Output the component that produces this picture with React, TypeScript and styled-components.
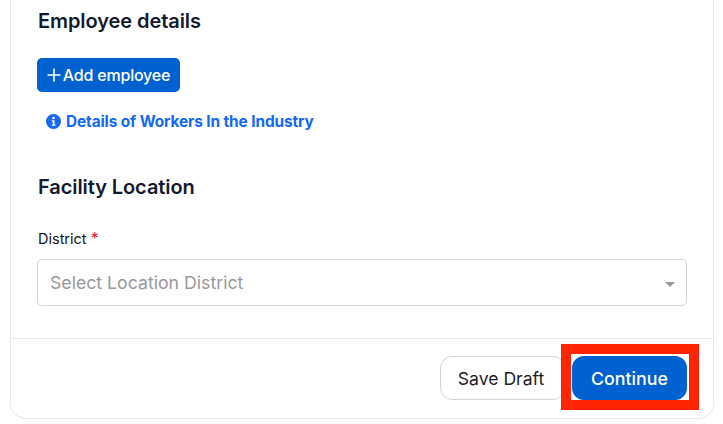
import styled, { createGlobalStyle } from 'styled-components';

const GlobalStyle = createGlobalStyle`
  html, body {
    margin: 0;
    padding: 0;
    background: #ffffff;
    overflow: hidden;
  }
  body {
    font-family: Inter, "Liberation Sans", sans-serif;
  }
`;

export default function App() {
  return (
    <Page>
      <GlobalStyle />
      <Card>
        <Body>
          <SectionTitle>Employee details</SectionTitle>
          <AddButton>
            <svg width="14" height="14" viewBox="0 0 14 14" fill="none">
              <path d="M7 0.5v13M0.5 7h13" stroke="#fff" strokeWidth="1.6" />
            </svg>
            Add employee
          </AddButton>
          <InfoLink>
            <svg width="15" height="15" viewBox="0 0 15 15">
              <circle cx="7.5" cy="7.5" r="7.5" fill="#1469f0" />
              <circle cx="7.5" cy="4" r="1.3" fill="#fff" />
              <path d="M5.8 6.2h2.7v4.3h1v1.2H5.8v-1.2h1V7.4h-1z" fill="#fff" />
            </svg>
            Details of Workers In the Industry
          </InfoLink>
          <LocationTitle>Facility Location</LocationTitle>
          <FieldLabel>
            District <Required>*</Required>
          </FieldLabel>
          <SelectBox>
            Select Location District
            <Caret />
          </SelectBox>
        </Body>
        <Footer>
          <DraftButton>Save Draft</DraftButton>
          <ContinueButton>
            Continue
            <Highlight />
          </ContinueButton>
        </Footer>
      </Card>
    </Page>
  );
}

const Page = styled.div`
  width: 723px;
  height: 424px;
  padding: 0 9px 5px 10px;
  box-sizing: border-box;
  display: flex;
  flex-direction: column;
  overflow: hidden;
`;
const Card = styled.div`
  flex: 1;
  box-sizing: border-box;
  border: 1px solid #e9e9ef;
  border-top: none;
  border-radius: 0 0 16px 16px;
  display: flex;
  flex-direction: column;
`;
const Body = styled.div`
  height: 338px;
  flex-shrink: 0;
  box-sizing: border-box;
  padding: 8px 26px 0 26px;
  display: flex;
  flex-direction: column;
  align-items: flex-start;
`;
const SectionTitle = styled.h2`
  margin: 0 0 0 1px;
  height: 26px;
  font-size: 20px;
  line-height: 26px;
  font-weight: 600;
  letter-spacing: -0.08px;
  color: #141a2e;
`;
const AddButton = styled.button`
  margin-top: 24px;
  width: 143px;
  height: 34px;
  border: none;
  border-radius: 5px;
  background: #0061d1;
  color: #ffffff;
  font-family: inherit;
  font-size: 16px;
  font-weight: 500;
  letter-spacing: -0.2px;
  display: flex;
  align-items: center;
  justify-content: center;
  gap: 2px;
  padding: 0;
`;
const InfoLink = styled.div`
  margin: 19px 0 0 9px;
  height: 20px;
  display: flex;
  align-items: center;
  gap: 5px;
  font-size: 15.4px;
  font-weight: 700;
  letter-spacing: -0.1px;
  color: #1469f0;
`;
const LocationTitle = styled(SectionTitle)`
  margin-top: 43px;
`;
const FieldLabel = styled.div`
  margin: 29px 0 0 1px;
  height: 18px;
  line-height: 18px;
  font-size: 14.5px;
  color: #141622;
`;
const Required = styled.span`
  color: #e5173f;
  font-size: 16px;
`;
const SelectBox = styled.div`
  margin-top: 12px;
  width: 650px;
  height: 47px;
  box-sizing: border-box;
  border: 1px solid #d2d2de;
  border-radius: 5px;
  padding: 0 12px;
  display: flex;
  align-items: center;
  justify-content: space-between;
  font-size: 17.7px;
  letter-spacing: 0;
  color: #98989e;
`;
const Caret = styled.span`
  width: 0;
  height: 0;
  margin-right: -1px;
  margin-top: 3px;
  border-left: 5px solid transparent;
  border-right: 5px solid transparent;
  border-top: 5px solid #98989e;
`;
const Footer = styled.div`
  flex: 1;
  border-top: 1px solid #e9e9ef;
  padding: 17px 26px 0 0;
  display: flex;
  justify-content: flex-end;
  align-items: flex-start;
  gap: 7px;
`;
const DraftButton = styled.button`
  width: 125px;
  height: 44px;
  box-sizing: border-box;
  border: 1px solid #d2d2de;
  border-radius: 12px;
  padding: 0 3px 0 0;
  background: #ffffff;
  color: #1c1c24;
  font-family: inherit;
  font-size: 17.6px;
  font-weight: 400;
`;
const ContinueButton = styled.button`
  position: relative;
  width: 115px;
  height: 44px;
  border: none;
  border-radius: 12px;
  background: #0061d1;
  color: #ffffff;
  font-family: inherit;
  font-size: 17.8px;
  font-weight: 500;
`;
const Highlight = styled.span`
  position: absolute;
  top: -12px;
  left: -11px;
  right: -12px;
  bottom: -10px;
  border: 10px solid #ff2500;
  box-sizing: border-box;
`;
